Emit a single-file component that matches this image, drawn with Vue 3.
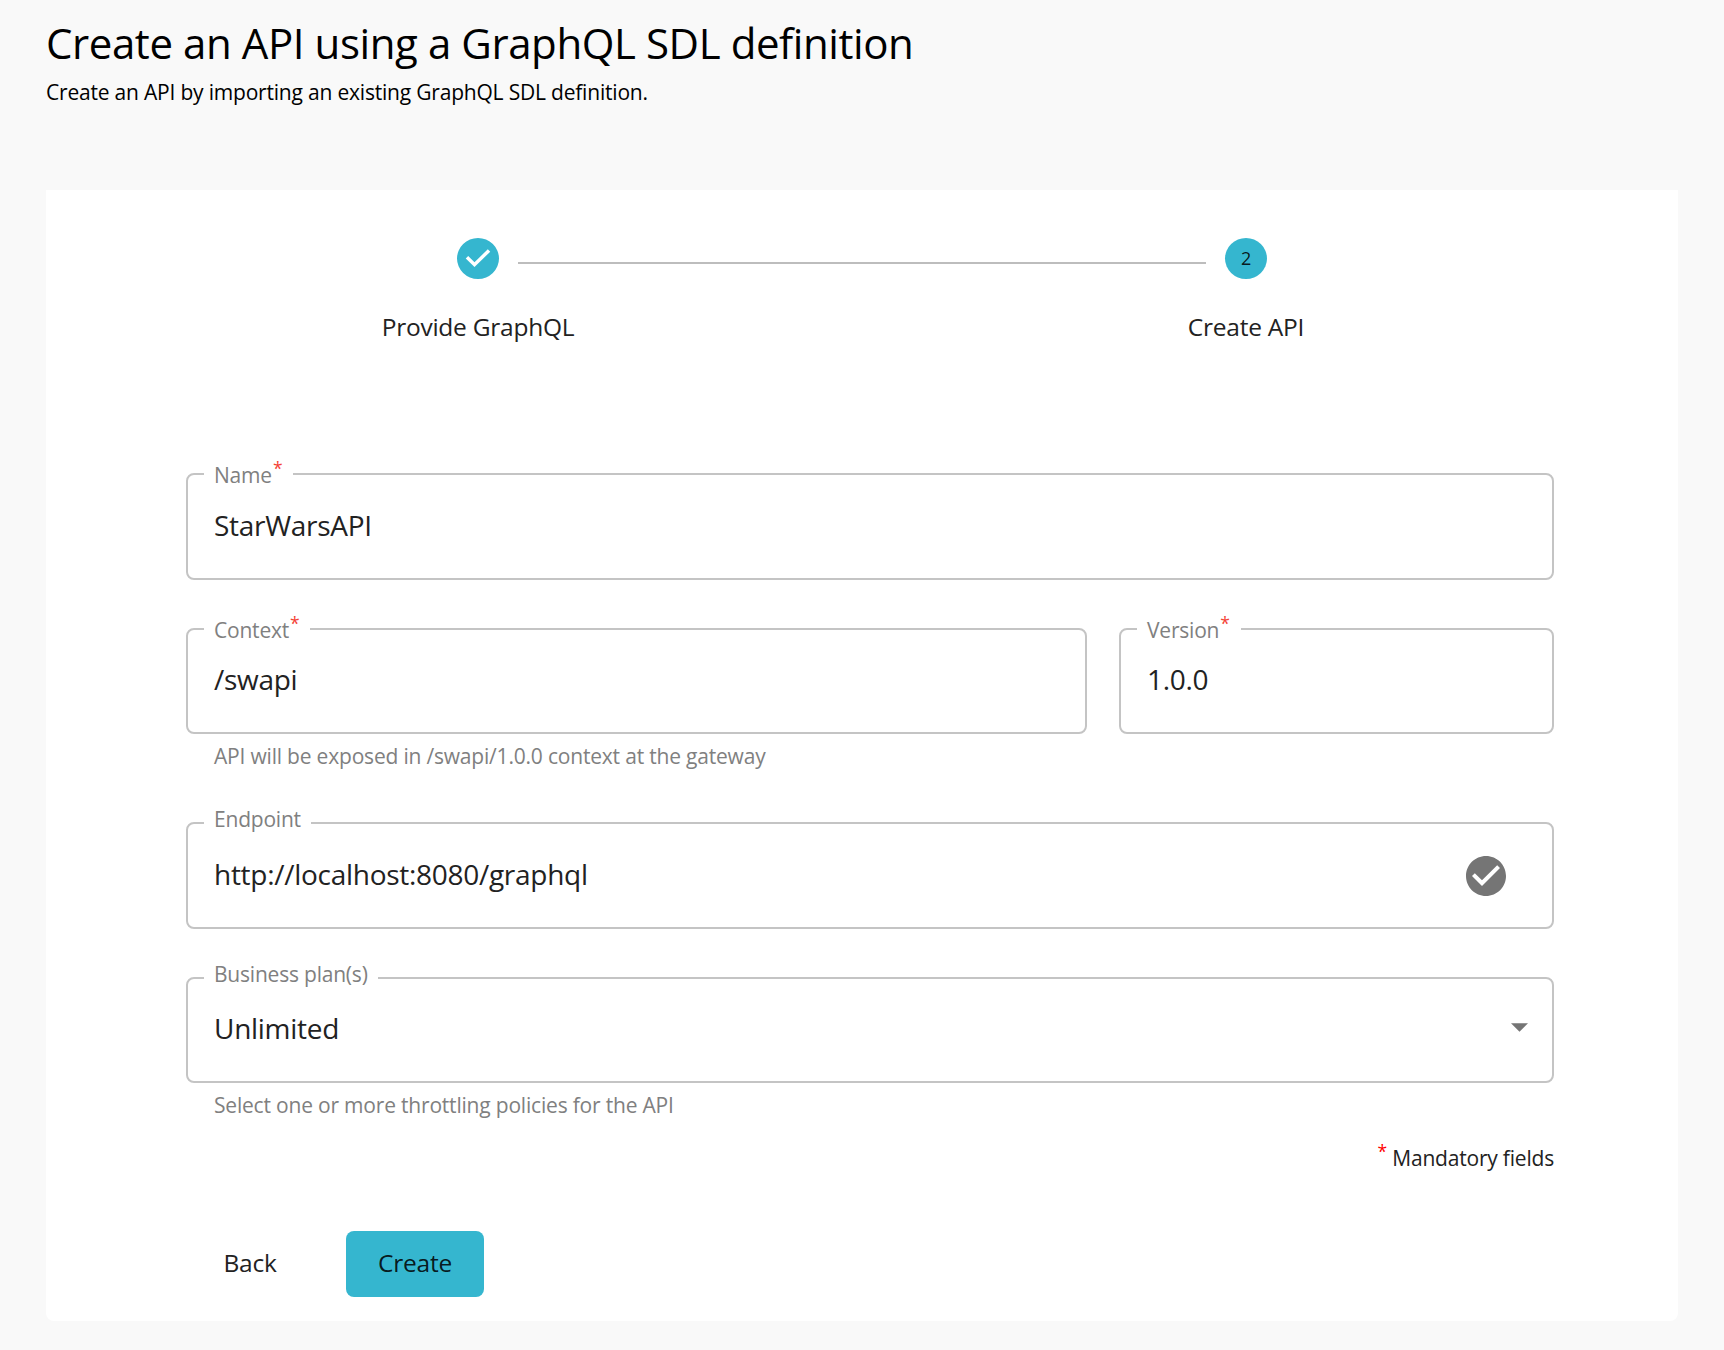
<script setup>
const steps = [
  { label: 'Provide GraphQL', done: true },
  { label: 'Create API', done: false }
]
</script>

<template>
  <main class="page">
    <header class="heading">
      <h1>Create an API using a GraphQL SDL definition</h1>
      <p>Create an API by importing an existing GraphQL SDL definition.</p>
    </header>

    <section class="card">
      <div class="stepper">
        <template v-for="(step, i) in steps" :key="step.label">
          <div v-if="i > 0" class="connector"></div>
          <div class="step">
            <svg v-if="step.done" class="step-icon" viewBox="0 0 24 24" preserveAspectRatio="none">
              <path d="M12 0a12 12 0 1 0 0 24 12 12 0 0 0 0-24zm-2 17l-5-5 1.4-1.4 3.6 3.6 7.6-7.6L19 8l-9 9z" />
            </svg>
            <span v-else class="step-icon step-number">{{ i + 1 }}</span>
            <span class="step-label">{{ step.label }}</span>
          </div>
        </template>
      </div>

      <form class="form" @submit.prevent>
        <div class="field tall">
          <label class="required">Name<sup>*</sup></label>
          <span class="value">StarWarsAPI</span>
        </div>

        <div class="row">
          <div class="field context">
            <label class="required">Context<sup>*</sup></label>
            <span class="value">/swapi</span>
          </div>
          <div class="field version">
            <label class="required">Version<sup>*</sup></label>
            <span class="value">1.0.0</span>
          </div>
        </div>
        <p class="helper">API will be exposed in /swapi/1.0.0 context at the gateway</p>

        <div class="field tall endpoint">
          <label>Endpoint</label>
          <span class="value">http://localhost:8080/graphql</span>
          <svg class="valid" viewBox="2 2 20 20">
            <path d="M12 2C6.48 2 2 6.48 2 12s4.48 10 10 10 10-4.48 10-10S17.52 2 12 2zm-2 15l-5-5 1.41-1.41L10 14.17l7.59-7.59L19 8l-9 9z" />
          </svg>
        </div>

        <div class="field plans">
          <label>Business plan(s)</label>
          <span class="value">Unlimited</span>
          <svg class="arrow" viewBox="7 10 10 5"><path d="M7 10l5 5 5-5z" /></svg>
        </div>
        <p class="helper">Select one or more throttling policies for the API</p>

        <p class="mandatory"><sup>*</sup> Mandatory fields</p>

        <div class="actions">
          <button type="button" class="back">Back</button>
          <button type="submit" class="create">Create</button>
        </div>
      </form>
    </section>
  </main>
</template>

<style>
body {
  background: #f9f9f9;
}
</style>

<style scoped>
* {
  box-sizing: border-box;
}
.page {
  height: 1350px;
  padding: 18px 46px 0;
  overflow: hidden;
  background: #f9f9f9;
  color: #000;
  font-family: "Open Sans", "Noto Sans", sans-serif;
  letter-spacing: -0.01em;
}
.heading {
  height: 172px;
}
h1 {
  margin: 0;
  font-size: 42px;
  line-height: 49px;
  font-weight: 400;
  letter-spacing: -0.01em;
}
p {
  margin: 0;
}
.heading p {
  margin-top: 7px;
  font-size: 21px;
  line-height: 36px;
  letter-spacing: -0.0095em;
}
.card {
  height: 1131px;
  padding: 48px 124px 0 140px;
  border-radius: 0 0 8px 8px;
  background: #fff;
  color: #222;
}
.stepper {
  display: flex;
  height: 235px;
  padding-right: 16px;
  justify-content: center;
}
.step {
  display: flex;
  flex: none;
  flex-direction: column;
  align-items: center;
  width: 200px;
}
.step-icon {
  width: 42px;
  height: 41px;
  fill: #35b6cf;
}
.step-number {
  border-radius: 50%;
  background: #35b6cf;
  color: rgba(0, 0, 0, 0.87);
  font-size: 18px;
  line-height: 41px;
  text-align: center;
}
.step-label {
  margin-top: 32px;
  font-size: 24.5px;
  line-height: 32px;
  letter-spacing: -0.01em;
}
.connector {
  flex: none;
  width: 688px;
  height: 2px;
  margin: 24px -60px 0;
  background: #bdbdbd;
}
.field {
  position: relative;
  display: flex;
  align-items: center;
  height: 106px;
  padding: 0 26px;
  border: 2px solid #c4c4c4;
  border-radius: 8px;
}
.field.tall {
  height: 107px;
}
.field label {
  position: absolute;
  top: -19px;
  left: 16px;
  padding: 0 10px;
  background: #fff;
  color: #808080;
  font-size: 21px;
  line-height: 28px;
  letter-spacing: -0.01em;
}
.field label.required {
  top: -14px;
  padding-right: 11px;
}
sup {
  margin-left: 1px;
  color: #f44336;
  font-size: 17.5px;
  line-height: 0;
  vertical-align: 8px;
}
.value {
  margin-bottom: 4px;
  font-size: 28px;
  line-height: 38px;
  letter-spacing: -0.01em;
}
.tall .value {
  margin-bottom: 3px;
}
.row {
  display: flex;
  gap: 32px;
  margin-top: 48px;
}
.context {
  width: 901px;
}
.version {
  width: 435px;
}
.helper {
  height: 28px;
  margin-top: 8px;
  padding-left: 28px;
  color: #808080;
  font-size: 21px;
  line-height: 28px;
  letter-spacing: -0.0093em;
}
.endpoint {
  margin-top: 52px;
}
.valid {
  width: 40px;
  height: 40px;
  margin-left: auto;
  margin-right: 20px;
  fill: #757575;
}
.plans {
  margin-top: 48px;
}
.arrow {
  width: 17px;
  height: 9px;
  margin: 0 -2px 6px auto;
  fill: #757575;
}
.mandatory {
  margin-top: 25px;
  font-size: 21px;
  line-height: 28px;
  letter-spacing: -0.0095em;
  text-align: right;
}
.mandatory sup {
  color: #f00;
}
.actions {
  display: flex;
  gap: 33px;
  margin-top: 59px;
}
button {
  height: 66px;
  padding: 0 0 2px;
  border: 0;
  border-radius: 8px;
  background: transparent;
  color: #222;
  font: 24.5px/44px "Open Sans", "Noto Sans", sans-serif;
  letter-spacing: -0.01em;
}
.back {
  width: 128px;
}
.create {
  width: 138px;
  margin-left: -1px;
  background: #35b6cf;
  color: rgba(0, 0, 0, 0.87);
}
</style>
